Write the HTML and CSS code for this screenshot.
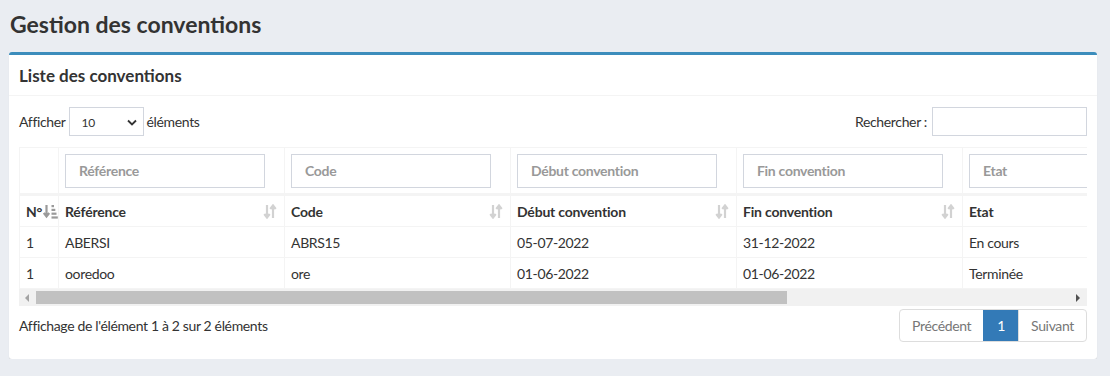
FILE: index.html
```html
<!DOCTYPE html>
<html lang="fr">
<head>
    <meta charset="UTF-8">
    <title>Gestion des conventions</title>
    <link rel="stylesheet" href="styles.css">
</head>
<body>
    <section class="content-header">
        <h1>Gestion des conventions</h1>
    </section>

    <div class="card">
        <div class="card-header">
            <h3>Liste des conventions</h3>
        </div>
        <div class="card-body">
            <!-- Barre de contrôle -->
            <div class="dt-top">
                <label class="dt-length">Afficher
                    <span class="select">10
                        <svg width="10" height="7" viewBox="0 0 10 7"><path d="M1 1.5 L5 5.5 L9 1.5" fill="none" stroke="#333" stroke-width="1.8"/></svg>
                    </span>
                    éléments
                </label>
                <label class="dt-search">Rechercher :
                    <input type="text">
                </label>
            </div>

            <!-- Tableau -->
            <div class="dt-scroll">
                <table class="dt-table">
                    <colgroup>
                        <col style="width:39px">
                        <col style="width:226px">
                        <col style="width:226px">
                        <col style="width:226px">
                        <col style="width:226px">
                        <col style="width:530px">
                    </colgroup>
                    <thead>
                        <tr class="filters">
                            <th></th>
                            <th><input type="text" placeholder="Référence"></th>
                            <th><input type="text" placeholder="Code"></th>
                            <th><input type="text" placeholder="Début convention"></th>
                            <th><input type="text" placeholder="Fin convention"></th>
                            <th><input type="text" placeholder="Etat"></th>
                        </tr>
                        <tr class="titles">
                            <th class="sorted">N°<svg width="15" height="15" viewBox="0 0 15 15"><path d="M3.5 1 V12 M0.8 9 L3.5 12.5 L6.2 9" fill="none" stroke="#9a9a9a" stroke-width="2.2"/><rect x="8.5" y="1" width="2.5" height="2.2" fill="#9a9a9a"/><rect x="8.5" y="4.8" width="3.8" height="2.2" fill="#9a9a9a"/><rect x="8.5" y="8.6" width="5" height="2.2" fill="#9a9a9a"/><rect x="8.5" y="12.4" width="6.3" height="2.2" fill="#9a9a9a"/></svg></th>
                            <th>Référence <i class="sort"></i></th>
                            <th>Code <i class="sort"></i></th>
                            <th>Début convention <i class="sort"></i></th>
                            <th>Fin convention <i class="sort"></i></th>
                            <th>Etat</th>
                        </tr>
                    </thead>
                    <tbody>
                        <tr>
                            <td>1</td>
                            <td>ABERSI</td>
                            <td>ABRS15</td>
                            <td>05-07-2022</td>
                            <td>31-12-2022</td>
                            <td>En cours</td>
                        </tr>
                        <tr>
                            <td>1</td>
                            <td>ooredoo</td>
                            <td>ore</td>
                            <td>01-06-2022</td>
                            <td>01-06-2022</td>
                            <td>Terminée</td>
                        </tr>
                    </tbody>
                </table>
            </div>
            <!-- Barre de défilement horizontale -->
            <div class="scrollbar">
                <span class="sb-btn"><svg width="5" height="8" viewBox="0 0 5 8"><path d="M4 0 L0 4 L4 8 Z" fill="#a3a3a3"/></svg></span>
                <span class="sb-track"><span class="sb-thumb"></span></span>
                <span class="sb-btn"><svg width="5" height="8" viewBox="0 0 5 8"><path d="M0 0 L4 4 L0 8 Z" fill="#505050"/></svg></span>
            </div>

            <!-- Pied du tableau -->
            <div class="dt-bottom">
                <div class="dt-info">Affichage de l'élément 1 à 2 sur 2 éléments</div>
                <ul class="pagination">
                    <li class="disabled">Précédent</li>
                    <li class="active">1</li>
                    <li class="disabled">Suivant</li>
                </ul>
            </div>
        </div>
    </div>
</body>
</html>
```

FILE: styles.css
```css
body {
    margin: 0;
    background: #eaedf2;
    font-family: Lato, 'Noto Sans', sans-serif;
    font-size: 14px;
    letter-spacing: -0.35px;
    color: #333;
}
.content-header {
    padding: 9px 10px 0;
    height: 52px;
    box-sizing: border-box;
}
.content-header h1 {
    margin: 0;
    font-size: 23px;
    font-weight: 700;
    letter-spacing: 0;
    color: #333;
    line-height: 30px;
}
.card {
    margin: 0 13px 0 9px;
    background: #fff;
    border-top: 3px solid #3c8dbc;
    border-radius: 3px;
    box-shadow: 0 1px 1px rgba(0, 0, 0, 0.1);
}
.card-header {
    height: 40px;
    padding: 0 10px;
    display: flex;
    align-items: center;
    border-bottom: 1px solid #f4f4f4;
}
.card-header h3 {
    margin: 0;
    font-size: 17px;
    font-weight: 700;
    letter-spacing: 0;
    color: #333;
}
.card-body {
    padding: 10px 10px 17px;
}
.dt-top {
    display: flex;
    justify-content: space-between;
    align-items: center;
    height: 30px;
    margin-bottom: 11px;
}
.dt-length, .dt-search {
    display: flex;
    align-items: center;
    gap: 3px;
}
.select {
    width: 75px;
    height: 29px;
    box-sizing: border-box;
    border: 1px solid #d2d6de;
    display: flex;
    align-items: center;
    justify-content: space-between;
    padding: 3px 6px 0 12px;
    font-size: 12px;
}
.dt-search input {
    width: 155px;
    height: 29px;
    box-sizing: border-box;
    border: 1px solid #d2d6de;
    margin-left: 2px;
}
.dt-scroll {
    overflow: hidden;
}
.dt-table {
    border-collapse: collapse;
    table-layout: fixed;
    width: 1473px;
}
.dt-table th, .dt-table td {
    border: 1px solid #f4f4f4;
    text-align: left;
    padding: 0 6px;
    white-space: nowrap;
}
.dt-table td {
    height: 30px;
}
.filters th {
    height: 45px;
    border-bottom: 3px solid #f4f4f4;
}
.filters input {
    width: 200px;
    height: 34px;
    box-sizing: border-box;
    border: 1px solid #d2d6de;
    padding: 0 13px;
    font-family: inherit;
    font-size: 14px;
    font-weight: 700;
    letter-spacing: -0.3px;
}
.filters input::placeholder {
    color: #999;
}
.titles th {
    height: 30px;
    position: relative;
    font-weight: 700;
    letter-spacing: -0.2px;
}
.sort {
    position: absolute;
    right: 7px;
    top: 8px;
    width: 14px;
    height: 15px;
    background: url("data:image/svg+xml,%3Csvg xmlns='http://www.w3.org/2000/svg' width='14' height='15'%3E%3Cpath d='M4 1 V13 M1.3 10 L4 13.5 L6.7 10 M10 14 V2 M7.3 5 L10 1.5 L12.7 5' fill='none' stroke='%23d2d2d2' stroke-width='2.2'/%3E%3C/svg%3E") no-repeat;
}
.sorted svg {
    vertical-align: -2px;
    margin-left: 1px;
}
.scrollbar {
    display: flex;
    height: 17px;
    background: #f1f1f1;
}
.sb-btn {
    width: 17px;
    display: flex;
    align-items: center;
    justify-content: center;
}
.sb-track {
    flex: 1;
    padding: 2px 0;
}
.sb-thumb {
    display: block;
    height: 100%;
    width: 72.6%;
    background: #c1c1c1;
}
.dt-bottom {
    display: flex;
    justify-content: space-between;
    align-items: center;
    margin-top: 3px;
}
.pagination {
    display: flex;
    margin: 0;
    padding: 0;
    list-style: none;
    border: 1px solid #ddd;
    border-radius: 4px;
    overflow: hidden;
}
.pagination li {
    padding: 0 12px;
    height: 31px;
    line-height: 31px;
    color: #777;
}
.pagination li.active {
    padding: 0 13px;
}
.pagination li + li {
    border-left: 1px solid #ddd;
}
.pagination li.active {
    background: #337ab7;
    color: #fff;
    border-color: #337ab7;
}
```
